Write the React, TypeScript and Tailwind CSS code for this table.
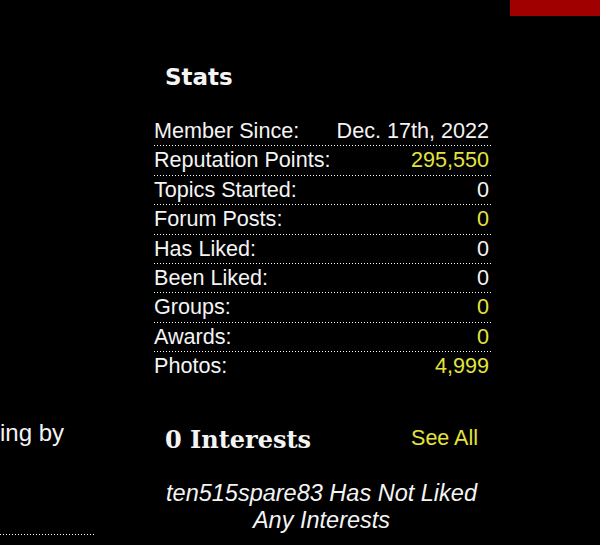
import React from "react";

const rows: { label: string; value: string; yellow?: boolean }[] = [
  { label: "Member Since:", value: "Dec. 17th, 2022" },
  { label: "Reputation Points:", value: "295,550", yellow: true },
  { label: "Topics Started:", value: "0" },
  { label: "Forum Posts:", value: "0", yellow: true },
  { label: "Has Liked:", value: "0" },
  { label: "Been Liked:", value: "0" },
  { label: "Groups:", value: "0", yellow: true },
  { label: "Awards:", value: "0", yellow: true },
  { label: "Photos:", value: "4,999", yellow: true },
];

function Dots({ className = "" }: { className?: string }) {
  return (
    <div
      className={`h-px bg-[linear-gradient(to_right,#ffffff_50%,transparent_50%)] bg-[length:3px_1px] bg-repeat-x ${className}`}
    />
  );
}

export default function App() {
  return (
    <div className="w-[600px] h-[545px] bg-black overflow-hidden text-[#f4f4f4] font-['Liberation_Sans',Arial,sans-serif]">
      <div className="flex justify-end h-[16px]">
        <div className="w-[90px] h-[16px] bg-[#a00000]" />
      </div>
      <div className="flex">
        <div className="w-[154px] shrink-0">
          <div className="mt-[403px] text-[24px] leading-[28.4px] whitespace-nowrap">ing by</div>
          <Dots className="mt-[87px] w-[94px]" />
        </div>
        <div className="w-[337px] shrink-0">
          <h2 className="mt-[47px] pl-[11px] text-[23px] leading-[28px] font-bold font-['DejaVu_Sans',Verdana,sans-serif]">
            Stats
          </h2>
          <div className="mt-[26px]">
            {rows.map((r, i) => (
              <div key={r.label}>
                <div className="flex justify-between items-baseline text-[21.6px] leading-[28.4px] pr-[2px]">
                  <span>{r.label}</span>
                  <span className={r.yellow ? "text-[#e4e43c]" : ""}>{r.value}</span>
                </div>
                {i < rows.length - 1 && <Dots />}
              </div>
            ))}
          </div>
          <div className="mt-[45px] flex justify-between items-start pl-[11px] pr-[13px]">
            <h2 className="text-[24px] leading-[28px] font-bold font-['DejaVu_Serif',Georgia,serif]">
              0 Interests
            </h2>
            <a className="text-[21.5px] leading-[24px] text-[#e4e43c]">See All</a>
          </div>
          <p className="mt-[26px] pl-[11px] pr-[13px] text-center italic text-[23.5px] leading-[27px]">
            ten515spare83 Has Not Liked Any Interests
          </p>
        </div>
      </div>
    </div>
  );
}
